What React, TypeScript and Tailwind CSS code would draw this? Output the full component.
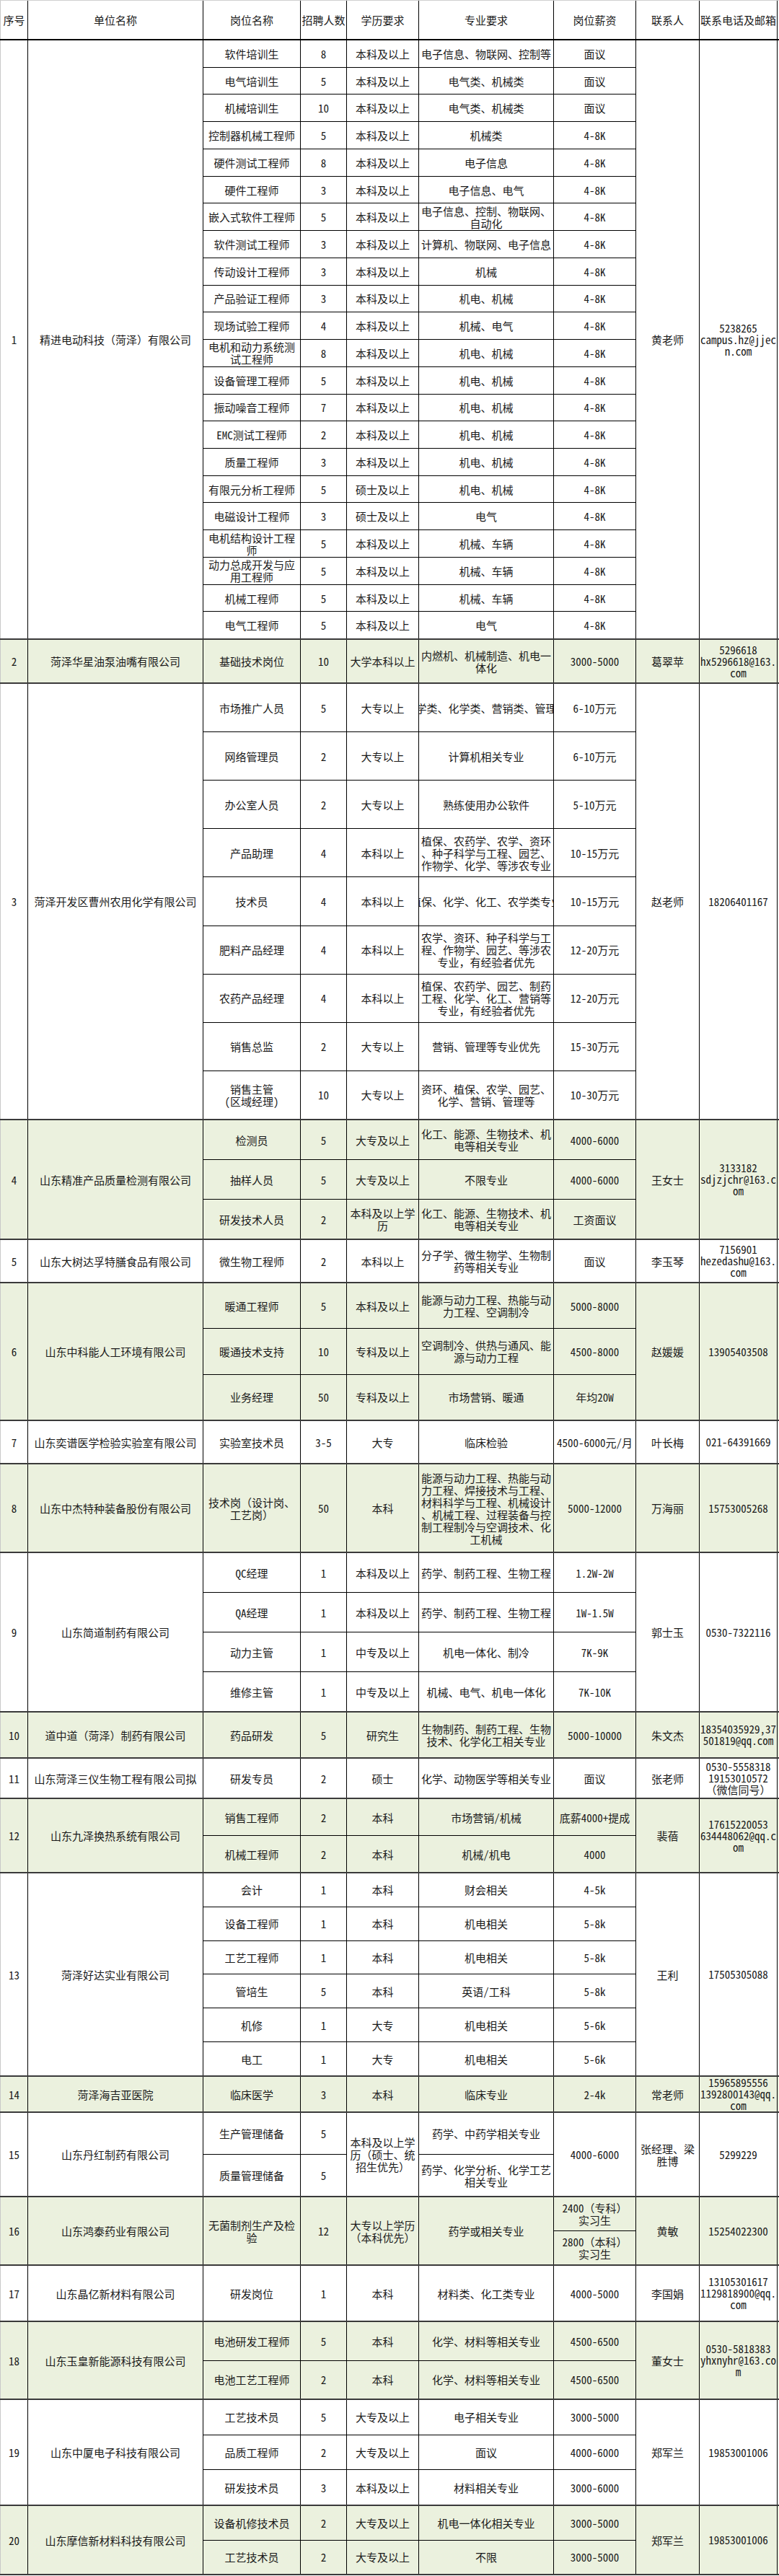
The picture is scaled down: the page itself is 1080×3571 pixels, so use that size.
import React from 'react';

type Company = {
  no: string;
  name: string;
  h: string;
  green?: boolean;
  jobs: string[];
  counts: string[];
  edu: string[];
  majors: string[];
  salary: string[];
  contact: string;
  phone: string;
  clip?: number[];
};

const W = [
  'w-[39px]',
  'w-[243px]',
  'w-[135px]',
  'w-[64px]',
  'w-[100px]',
  'w-[187px]',
  'w-[114px]',
  'w-[88px]',
  'w-[108px]',
];

const HEAD = ['序号', '单位名称', '岗位名称', '招聘人数', '学历要求', '专业要求', '岗位薪资', '联系人', '联系电话及邮箱'];

const rep = (v: string, n: number) => Array.from({ length: n }, () => v);

const companies: Company[] = [
  {
    no: '1',
    name: '精进电动科技（菏泽）有限公司',
    h: 'h-[831px]',
    jobs: [
      '软件培训生', '电气培训生', '机械培训生', '控制器机械工程师', '硬件测试工程师', '硬件工程师',
      '嵌入式软件工程师', '软件测试工程师', '传动设计工程师', '产品验证工程师', '现场试验工程师',
      '电机和动力系统测试工程师', '设备管理工程师', '振动噪音工程师', 'EMC测试工程师', '质量工程师',
      '有限元分析工程师', '电磁设计工程师', '电机结构设计工程师', '动力总成开发与应用工程师', '机械工程师', '电气工程师',
    ],
    counts: ['8', '5', '10', '5', '8', '3', '5', '3', '3', '3', '4', '8', '5', '7', '2', '3', '5', '3', '5', '5', '5', '5'],
    edu: [...rep('本科及以上', 16), '硕士及以上', '硕士及以上', ...rep('本科及以上', 4)],
    majors: [
      '电子信息、物联网、控制等', '电气类、机械类', '电气类、机械类', '机械类', '电子信息', '电子信息、电气',
      '电子信息、控制、物联网、自动化', '计算机、物联网、电子信息', '机械', '机电、机械', '机械、电气',
      '机电、机械', '机电、机械', '机电、机械', '机电、机械', '机电、机械', '机电、机械', '电气',
      '机械、车辆', '机械、车辆', '机械、车辆', '电气',
    ],
    salary: [...rep('面议', 3), ...rep('4-8K', 19)],
    contact: '黄老师',
    phone: '5238265\ncampus.hz@jjecn.com',
  },
  {
    no: '2',
    name: '菏泽华星油泵油嘴有限公司',
    h: 'h-[61px]',
    green: true,
    jobs: ['基础技术岗位'],
    counts: ['10'],
    edu: ['大学本科以上'],
    majors: ['内燃机、机械制造、机电一体化'],
    salary: ['3000-5000'],
    contact: '葛翠苹',
    phone: '5296618\nhx5296618@163.com',
  },
  {
    no: '3',
    name: '菏泽开发区曹州农用化学有限公司',
    h: 'h-[605px]',
    jobs: ['市场推广人员', '网络管理员', '办公室人员', '产品助理', '技术员', '肥料产品经理', '农药产品经理', '销售总监', '销售主管\n(区域经理)'],
    counts: ['5', '2', '2', '4', '4', '4', '4', '2', '10'],
    edu: ['大专以上', '大专以上', '大专以上', '本科以上', '本科以上', '本科以上', '本科以上', '大专以上', '大专以上'],
    majors: [
      '农学类、化学类、营销类、管理类',
      '计算机相关专业',
      '熟练使用办公软件',
      '植保、农药学、农学、资环、种子科学与工程、园艺、作物学、化学、等涉农专业',
      '植保、化学、化工、农学类专业',
      '农学、资环、种子科学与工程、作物学、园艺、等涉农专业，有经验者优先',
      '植保、农药学、园艺、制药工程、化学、化工、营销等专业，有经验者优先',
      '营销、管理等专业优先',
      '资环、植保、农学、园艺、化学、营销、管理等',
    ],
    salary: ['6-10万元', '6-10万元', '5-10万元', '10-15万元', '10-15万元', '12-20万元', '12-20万元', '15-30万元', '10-30万元'],
    contact: '赵老师',
    phone: '18206401167',
    clip: [0, 4],
  },
  {
    no: '4',
    name: '山东精准产品质量检测有限公司',
    h: 'h-[166px]',
    green: true,
    jobs: ['检测员', '抽样人员', '研发技术人员'],
    counts: ['5', '5', '2'],
    edu: ['大专及以上', '大专及以上', '本科及以上学历'],
    majors: ['化工、能源、生物技术、机电等相关专业', '不限专业', '化工、能源、生物技术、机电等相关专业'],
    salary: ['4000-6000', '4000-6000', '工资面议'],
    contact: '王女士',
    phone: '3133182\nsdjzjchr@163.com',
  },
  {
    no: '5',
    name: '山东大树达孚特膳食品有限公司',
    h: 'h-[60px]',
    jobs: ['微生物工程师'],
    counts: ['2'],
    edu: ['本科以上'],
    majors: ['分子学、微生物学、生物制药等相关专业'],
    salary: ['面议'],
    contact: '李玉琴',
    phone: '7156901\nhezedashu@163.com',
  },
  {
    no: '6',
    name: '山东中科能人工环境有限公司',
    h: 'h-[191px]',
    green: true,
    jobs: ['暖通工程师', '暖通技术支持', '业务经理'],
    counts: ['5', '10', '50'],
    edu: ['本科及以上', '专科及以上', '专科及以上'],
    majors: ['能源与动力工程、热能与动力工程、空调制冷', '空调制冷、供热与通风、能源与动力工程', '市场营销、暖通'],
    salary: ['5000-8000', '4500-8000', '年均20W'],
    contact: '赵媛媛',
    phone: '13905403508',
  },
  {
    no: '7',
    name: '山东奕谱医学检验实验室有限公司',
    h: 'h-[60px]',
    jobs: ['实验室技术员'],
    counts: ['3-5'],
    edu: ['大专'],
    majors: ['临床检验'],
    salary: ['4500-6000元/月'],
    contact: '叶长梅',
    phone: '021-64391669',
  },
  {
    no: '8',
    name: '山东中杰特种装备股份有限公司',
    h: 'h-[123px]',
    green: true,
    jobs: ['技术岗（设计岗、工艺岗）'],
    counts: ['50'],
    edu: ['本科'],
    majors: ['能源与动力工程、热能与动力工程、焊接技术与工程、材料科学与工程、机械设计、机械工程、过程装备与控制工程制冷与空调技术、化工机械'],
    salary: ['5000-12000'],
    contact: '万海丽',
    phone: '15753005268',
  },
  {
    no: '9',
    name: '山东简道制药有限公司',
    h: 'h-[221px]',
    jobs: ['QC经理', 'QA经理', '动力主管', '维修主管'],
    counts: ['1', '1', '1', '1'],
    edu: ['本科及以上', '本科及以上', '中专及以上', '中专及以上'],
    majors: ['药学、制药工程、生物工程', '药学、制药工程、生物工程', '机电一体化、制冷', '机械、电气、机电一体化'],
    salary: ['1.2W-2W', '1W-1.5W', '7K-9K', '7K-10K'],
    contact: '郭士玉',
    phone: '0530-7322116',
  },
  {
    no: '10',
    name: '道中道（菏泽）制药有限公司',
    h: 'h-[64px]',
    green: true,
    jobs: ['药品研发'],
    counts: ['5'],
    edu: ['研究生'],
    majors: ['生物制药、制药工程、生物技术、化学化工相关专业'],
    salary: ['5000-10000'],
    contact: '朱文杰',
    phone: '18354035929,37501819@qq.com',
  },
  {
    no: '11',
    name: '山东菏泽三仪生物工程有限公司拟',
    h: 'h-[56px]',
    jobs: ['研发专员'],
    counts: ['2'],
    edu: ['硕士'],
    majors: ['化学、动物医学等相关专业'],
    salary: ['面议'],
    contact: '张老师',
    phone: '0530-5558318\n19153010572\n（微信同号）',
  },
  {
    no: '12',
    name: '山东九泽换热系统有限公司',
    h: 'h-[103px]',
    green: true,
    jobs: ['销售工程师', '机械工程师'],
    counts: ['2', '2'],
    edu: ['本科', '本科'],
    majors: ['市场营销/机械', '机械/机电'],
    salary: ['底薪4000+提成', '4000'],
    contact: '裴蓓',
    phone: '17615220053\n634448062@qq.com',
  },
  {
    no: '13',
    name: '菏泽好达实业有限公司',
    h: 'h-[282px]',
    jobs: ['会计', '设备工程师', '工艺工程师', '管培生', '机修', '电工'],
    counts: ['1', '1', '1', '5', '1', '1'],
    edu: ['本科', '本科', '本科', '本科', '大专', '大专'],
    majors: ['财会相关', '机电相关', '机电相关', '英语/工科', '机电相关', '机电相关'],
    salary: ['4-5k', '5-8k', '5-8k', '5-8k', '5-6k', '5-6k'],
    contact: '王利',
    phone: '17505305088',
  },
  {
    no: '14',
    name: '菏泽海吉亚医院',
    h: 'h-[50px]',
    green: true,
    jobs: ['临床医学'],
    counts: ['3'],
    edu: ['本科'],
    majors: ['临床专业'],
    salary: ['2-4k'],
    contact: '常老师',
    phone: '15965895556\n1392800143@qq.com',
  },
  {
    no: '15',
    name: '山东丹红制药有限公司',
    h: 'h-[117px]',
    jobs: ['生产管理储备', '质量管理储备'],
    counts: ['5', '5'],
    edu: ['本科及以上学历（硕士、统招生优先）'],
    majors: ['药学、中药学相关专业', '药学、化学分析、化学工艺相关专业'],
    salary: ['4000-6000'],
    contact: '张经理、梁胜博',
    phone: '5299229',
  },
  {
    no: '16',
    name: '山东鸿泰药业有限公司',
    h: 'h-[95px]',
    green: true,
    jobs: ['无菌制剂生产及检验'],
    counts: ['12'],
    edu: ['大专以上学历（本科优先）'],
    majors: ['药学或相关专业'],
    salary: ['2400（专科）\n实习生', '2800（本科）\n实习生'],
    contact: '黄敏',
    phone: '15254022300',
  },
  {
    no: '17',
    name: '山东晶亿新材料有限公司',
    h: 'h-[78px]',
    jobs: ['研发岗位'],
    counts: ['1'],
    edu: ['本科'],
    majors: ['材料类、化工类专业'],
    salary: ['4000-5000'],
    contact: '李国娟',
    phone: '13105301617\n1129818900@qq.com',
  },
  {
    no: '18',
    name: '山东玉皇新能源科技有限公司',
    h: 'h-[108px]',
    green: true,
    jobs: ['电池研发工程师', '电池工艺工程师'],
    counts: ['5', '2'],
    edu: ['本科', '本科'],
    majors: ['化学、材料等相关专业', '化学、材料等相关专业'],
    salary: ['4500-6500', '4500-6500'],
    contact: '董女士',
    phone: '0530-5818383\nyhxnyhr@163.com',
  },
  {
    no: '19',
    name: '山东中厦电子科技有限公司',
    h: 'h-[147px]',
    jobs: ['工艺技术员', '品质工程师', '研发技术员'],
    counts: ['5', '2', '3'],
    edu: ['大专及以上', '大专及以上', '本科及以上'],
    majors: ['电子相关专业', '面议', '材料相关专业'],
    salary: ['3000-5000', '4000-6000', '3000-6000'],
    contact: '郑军兰',
    phone: '19853001006',
  },
  {
    no: '20',
    name: '山东摩信新材料科技有限公司',
    h: 'h-[96px]',
    green: true,
    jobs: ['设备机修技术员', '工艺技术员'],
    counts: ['2', '2'],
    edu: ['大专及以上', '大专及以上'],
    majors: ['机电一体化相关专业', '不限'],
    salary: ['3000-5000', '3000-5000'],
    contact: '郑军兰',
    phone: '19853001006',
  },
];

function Column({
  w,
  cells,
  clip,
  first,
  tight,
}: {
  w: string;
  cells: string[];
  clip?: number[];
  first?: boolean;
  tight?: boolean;
}) {
  return (
    <div className={`${w} shrink-0 flex flex-col border-r border-black ${first ? 'border-l border-l-[#c8c8c8]' : ''}`}>
      {cells.map((t, i) => (
        <div
          key={i}
          className={`flex-1 basis-0 min-h-0 flex items-center justify-center overflow-hidden border-b border-black last:border-b-0 px-[1px] text-center ${tight ? 'leading-[16px]' : ''}`}
        >
          <span className={clip?.includes(i) ? 'whitespace-nowrap shrink-0' : 'whitespace-pre-line'}>{t}</span>
        </div>
      ))}
    </div>
  );
}

export default function App() {
  return (
    <div className="w-[1080px] bg-white text-[#1a1a1a] text-[15px] leading-[17px] font-['Noto_Sans_Mono_CJK_SC','Noto_Sans_CJK_SC',sans-serif] break-all [line-break:anywhere]">
      {/* Header */}
      <div className="flex h-[56px] border-t border-t-[#d0d0d0] border-b-2 border-black">
        {HEAD.map((t, i) => (
          <div
            key={t}
            className={`${W[i]} shrink-0 flex items-center justify-center text-center border-r border-black ${i === 0 ? 'border-l border-l-[#c8c8c8]' : ''}`}
          >
            {t}
          </div>
        ))}
      </div>

      {companies.map((c) => (
        <div key={c.no} className={`flex ${c.h} border-b-2 border-[#3a3a3a] ${c.green ? 'bg-[#ebf1de]' : 'bg-white'}`}>
          <Column w={W[0]} cells={[c.no]} first />
          <Column w={W[1]} cells={[c.name]} />
          <Column w={W[2]} cells={c.jobs} />
          <Column w={W[3]} cells={c.counts} />
          <Column w={W[4]} cells={c.edu} />
          <Column w={W[5]} cells={c.majors} clip={c.clip} />
          <Column w={W[6]} cells={c.salary} />
          <Column w={W[7]} cells={[c.contact]} />
          <Column w={W[8]} cells={[c.phone]} tight />
        </div>
      ))}
    </div>
  );
}
